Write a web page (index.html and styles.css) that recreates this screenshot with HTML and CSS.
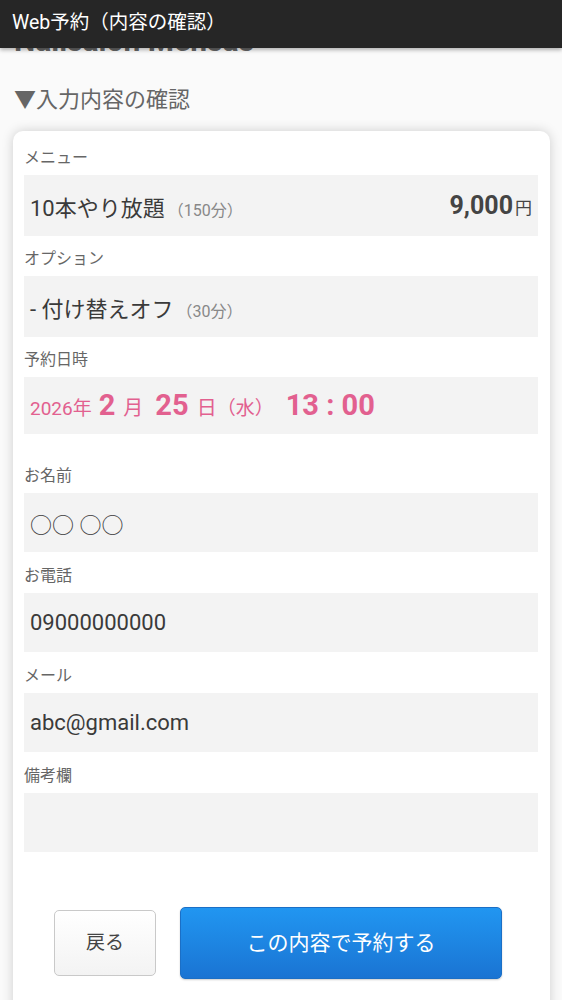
FILE: index.html
```html
<!DOCTYPE html>
<html lang="ja">
<head>
	<meta charset="UTF-8">
	<title>Web予約（内容の確認）</title>
	<link rel="stylesheet" href="styles.css">
</head>
<body>
	<header class="appbar">Web予約（内容の確認）</header>
	<main class="page">
		<div class="peek"><h1 class="shop">Nailsalon Mensas</h1></div>
		<h2 class="section">▼入力内容の確認</h2>
		<div class="card">
			<div class="field">
				<div class="label">メニュー</div>
				<div class="value tall">
					<span class="main">10本やり放題<span class="sub">（150分）</span></span>
					<span class="price">9,000<span class="yen">円</span></span>
				</div>
			</div>
			<div class="field">
				<div class="label">オプション</div>
				<div class="value tall">
					<span class="main">- 付け替えオフ<span class="sub">（30分）</span></span>
				</div>
			</div>
			<div class="field">
				<div class="label">予約日時</div>
				<div class="value date">
					<span class="d-sm">2026年</span><span class="d-big">2</span><span class="d-md">月</span><span class="d-big">25</span><span class="d-md last">日</span><span class="d-sm">（水）</span><span class="d-time">13 : 00</span>
				</div>
			</div>
			<div class="field gap-lg">
				<div class="label">お名前</div>
				<div class="value"><span class="main">○○ ○○</span></div>
			</div>
			<div class="field">
				<div class="label">お電話</div>
				<div class="value"><span class="main">09000000000</span></div>
			</div>
			<div class="field">
				<div class="label">メール</div>
				<div class="value"><span class="main">abc@gmail.com</span></div>
			</div>
			<div class="field">
				<div class="label">備考欄</div>
				<div class="value"></div>
			</div>
			<div class="actions">
				<a href="javascript:;" class="btn back">戻る</a>
				<a href="javascript:;" class="btn submit">この内容で予約する</a>
			</div>
		</div>
	</main>
</body>
</html>
```
FILE: styles.css
```css
	body{
		margin:0;
		background:#fafafa;
		font-family:Roboto,"Noto Sans CJK JP",sans-serif;
		color:#333;
		overflow:hidden;
	}
	.appbar{
		position:relative;
		height:48px;
		line-height:45px;
		padding-left:12px;
		background:#262626;
		color:#fff;
		font-size:19.5px;
		z-index:2;
		box-shadow:0 2px 4px rgba(0,0,0,.3);
	}
	/* shop title scrolled under the bar, only its foot shows */
	.peek{
		height:7px;
		overflow:hidden;
	}
	.shop{
		margin:-22px 0 0 14px;
		font-size:30px;
		line-height:30px;
		color:#666;
		font-weight:bold;
	}
	.section{
		margin:32px 0 0 14px;
		font-size:22px;
		line-height:26px;
		font-weight:normal;
		color:#666;
	}
	.card{
		margin:18px 12px 0 13px;
		padding:15px 12px 40px 11px;
		background:#fff;
		border-radius:10px;
		box-shadow:0 0 12px rgba(0,0,0,.18);
	}
	.field{
		margin-top:12px;
	}
	.field:first-child{
		margin-top:0;
	}
	.field:nth-child(2),.field:nth-child(3){
		margin-top:11px;
	}
	.field.gap-lg{
		margin-top:30px;
	}
	.label{
		font-size:16px;
		line-height:24px;
		color:#666;
		margin-bottom:5px;
	}
	.value{
		display:flex;
		align-items:center;
		justify-content:space-between;
		height:59px;
		padding:0 6px;
		background:#f3f3f3;
	}
	.value.tall{
		height:61px;
	}
	.main{
		font-size:22px;
		color:#3a3a3a;
	}
	.sub{
		font-size:16px;
		color:#888;
		margin-left:3px;
	}
	.price{
		font-size:25px;
		font-weight:bold;
		color:#444;
	}
	.yen{
		font-size:17px;
		font-weight:normal;
		margin-left:2px;
	}
	.value.date{
		height:57px;
		justify-content:flex-start;
		align-items:baseline;
		color:#e2608f;
		line-height:57px;
	}
	.d-sm{font-size:19px;}
	.d-md{font-size:20px;margin:0 5px 0 8px;}
	.d-md.last{margin-right:0;}
	.d-big{font-size:29px;font-weight:bold;margin-left:7px;}
	.d-time{font-size:29px;font-weight:bold;margin-left:12px;}
	.actions{
		display:flex;
		align-items:center;
		gap:24px;
		margin-top:55px;
		padding-left:30px;
	}
	.btn{
		display:block;
		text-decoration:none;
		text-align:center;
		border-radius:5px;
		box-sizing:border-box;
	}
	.back{
		width:102px;
		height:66px;
		line-height:64px;
		font-size:19px;
		color:#444;
		border:1px solid #c9c9c9;
		background:linear-gradient(#fff,#f3f3f3);
	}
	.submit{
		width:322px;
		height:72px;
		line-height:70px;
		font-size:21px;
		color:#fff;
		border:1px solid #1b6fc6;
		background:linear-gradient(#2196f1,#1a74d3);
		box-shadow:0 1px 2px rgba(0,0,0,.2);
	}
```
